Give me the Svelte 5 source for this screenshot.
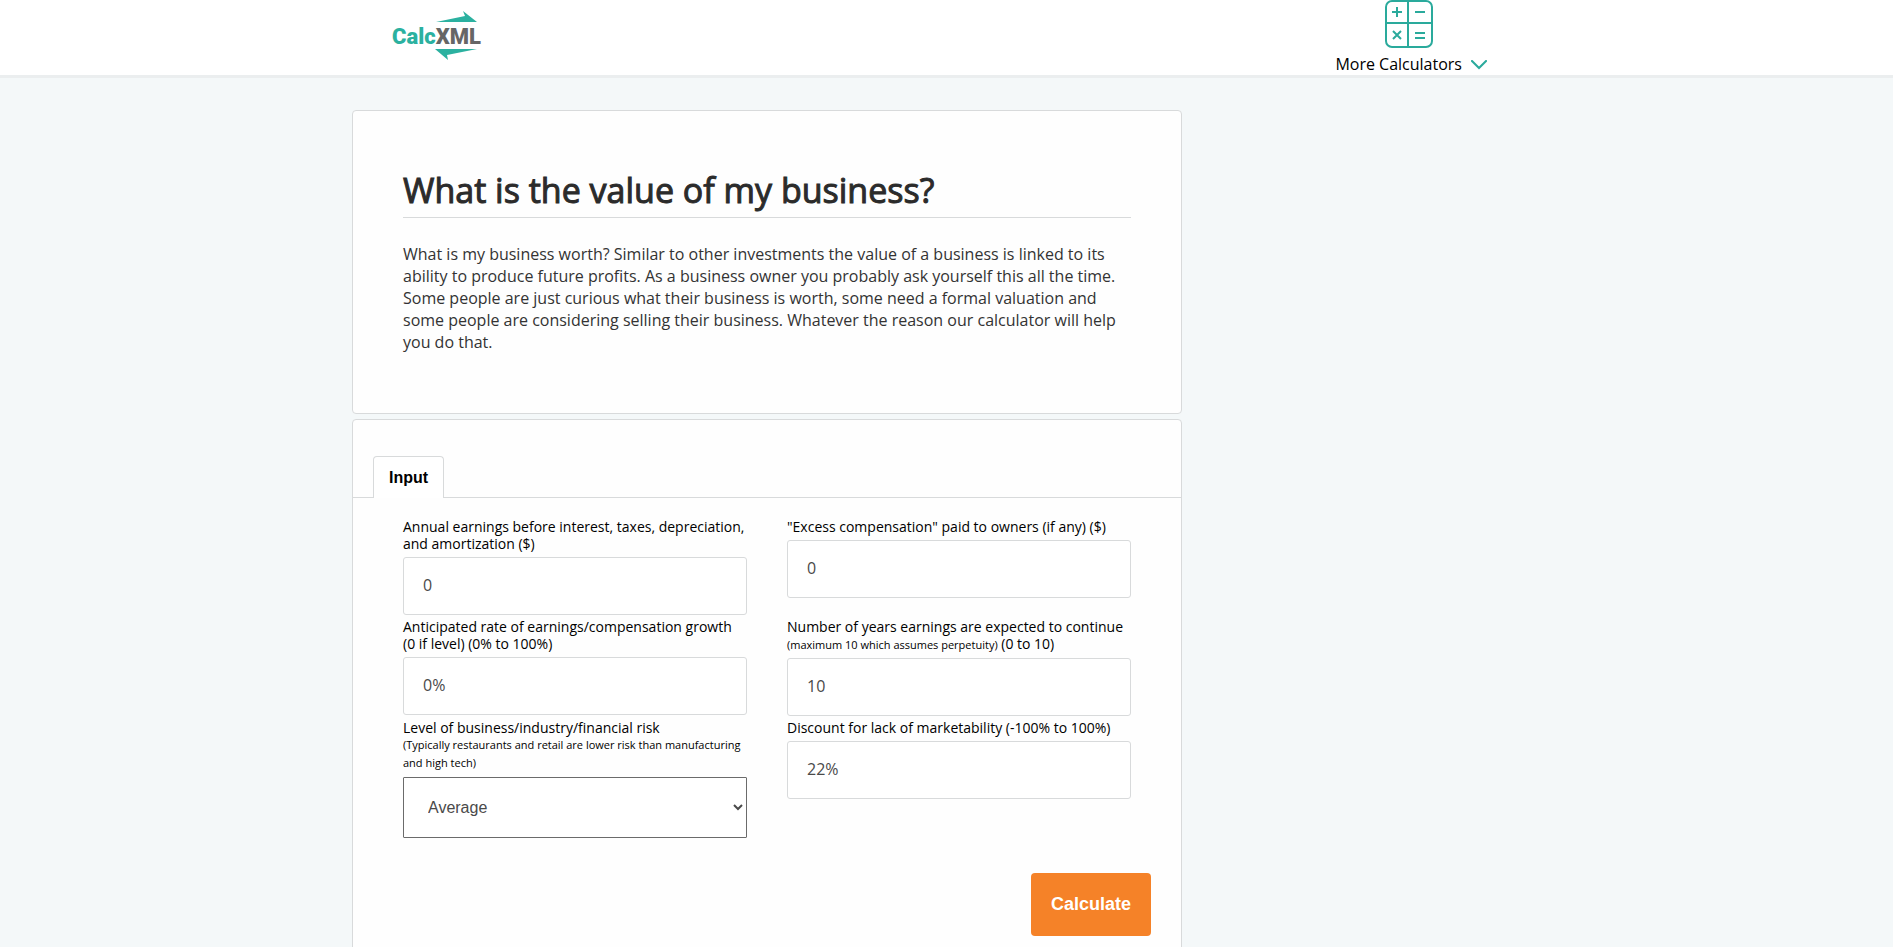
<script>
	const risks = ['Low', 'Below average', 'Average', 'Above average', 'High'];
	let earnings = '0';
	let excess = '0';
	let growth = '0%';
	let years = '10';
	let risk = 'Average';
	let discount = '22%';
</script>

<div class="page">
	<header>
		<div class="container bar">
			<a class="logo" href="/" aria-label="CalcXML">
				<svg viewBox="0 0 92 52" width="92" height="52">
					<path d="M44 12L73 6L71 1L85 12Z" fill="#2bb1a0" />
					<text x="0" y="34" fill="#2bb1a0">Calc<tspan fill="#666">XML</tspan></text>
					<path d="M43 39H85L55 45L56 50Z" fill="#2bb1a0" />
				</svg>
			</a>
			<button class="more" type="button">
				<svg
					class="grid-icon"
					viewBox="0 0 48 48"
					width="48"
					height="48"
					fill="none"
					stroke="#2aaa9c"
					stroke-width="2"
				>
					<rect x="1" y="1" width="46" height="46" rx="6" />
					<path d="M23 1V47M1 23H47M7 12H17M12 7V17M30 12H40M8 31L16 39M16 31L8 39M30 33H40M30 38H40" />
				</svg>
				<span class="more-label">
					More Calculators
					<svg viewBox="0 0 16 10" width="16" height="10" fill="none" stroke="#2aaa9c" stroke-width="2">
						<path d="M1 1L8 8L15 1" stroke-linecap="square" />
					</svg>
				</span>
			</button>
		</div>
	</header>

	<main class="container">
		<section class="card intro">
			<h1>What is the value of my business?</h1>
			<p>
				What is my business worth? Similar to other investments the value of a business is linked to its
				ability to produce future profits. As a business owner you probably ask yourself this all the
				time. Some people are just curious what their business is worth, some need a formal valuation and
				some people are considering selling their business. Whatever the reason our calculator will help
				you do that.
			</p>
		</section>

		<section class="card calc">
			<div class="tabs" role="tablist">
				<button class="tab" type="button" role="tab" aria-selected="true">Input</button>
			</div>
			<form on:submit|preventDefault>
				<div class="fields">
					<div class="field">
						<label for="earnings">
							Annual earnings before interest, taxes, depreciation, and amortization ($)
						</label>
						<input id="earnings" type="text" bind:value={earnings} />
					</div>
					<div class="field">
						<label for="excess">"Excess compensation" paid to owners (if any) ($)</label>
						<input id="excess" type="text" bind:value={excess} />
					</div>
					<div class="field">
						<label for="growth">
							Anticipated rate of earnings/compensation growth (0 if level) (0% to 100%)
						</label>
						<input id="growth" type="text" bind:value={growth} />
					</div>
					<div class="field">
						<label for="years">
							Number of years earnings are expected to continue
							<small>(maximum 10 which assumes perpetuity)</small> (0 to 10)
						</label>
						<input id="years" type="text" bind:value={years} />
					</div>
					<div class="field">
						<label for="risk">
							Level of business/industry/financial risk
							<small class="note">
								(Typically restaurants and retail are lower risk than manufacturing and high tech)
							</small>
						</label>
						<select id="risk" bind:value={risk}>
							{#each risks as r}
								<option>{r}</option>
							{/each}
						</select>
					</div>
					<div class="field">
						<label for="discount">Discount for lack of marketability (-100% to 100%)</label>
						<input id="discount" type="text" bind:value={discount} />
					</div>
				</div>
				<div class="actions">
					<button class="calculate" type="submit">Calculate</button>
				</div>
			</form>
		</section>
	</main>
</div>

<style>
	:global(body) {
		background: #f4f8f9;
	}
	.page {
		font-family: 'Open Sans', sans-serif;
		color: #000;
	}
	.page * {
		box-sizing: border-box;
	}
	.container {
		max-width: 1189px;
		margin: 0 auto;
	}
	header {
		background: #fff;
		border-bottom: 3px solid #ebeeef;
	}
	.bar {
		display: flex;
		justify-content: space-between;
		padding: 0 54px 0 40px;
	}
	.logo {
		padding-top: 10px;
	}
	.logo svg {
		display: block;
	}
	.logo text {
		font: 900 22px Roboto, sans-serif;
	}
	.more {
		display: flex;
		flex-direction: column;
		align-items: center;
		padding: 0;
		border: 0;
		background: none;
		font: 16px/22px 'Open Sans', sans-serif;
		color: #000;
		cursor: pointer;
	}
	.grid-icon {
		margin-right: 4px;
	}
	.more-label {
		display: flex;
		align-items: center;
		gap: 9px;
		padding-top: 5px;
	}
	.more-label svg {
		margin-top: 2px;
	}
	main {
		padding-top: 32px;
	}
	.card {
		max-width: 830px;
		background: #fefefe;
		border: 1px solid #d8dadb;
		border-radius: 4px;
	}
	.intro {
		padding: 55px 50px 60px;
		margin-bottom: 5px;
	}
	h1 {
		margin: 0 0 25px;
		padding-bottom: 3px;
		border-bottom: 1px solid #d8dadb;
		font-size: 34px;
		line-height: 48px;
		font-weight: 400;
		color: #2b2b2b;
		-webkit-text-stroke: 1px #2b2b2b;
	}
	.intro p {
		margin: 0;
		font-size: 16px;
		line-height: 22px;
		color: #333;
	}
	.tabs {
		display: flex;
		padding: 36px 20px 0;
		border-bottom: 1px solid #d8dadb;
	}
	.tab {
		margin-bottom: -1px;
		height: 42px;
		padding: 0 15px;
		border: 1px solid #d8dadb;
		border-bottom: 0;
		border-radius: 4px 4px 0 0;
		background: #fff;
		font: bold 16px 'Liberation Sans', Arial, sans-serif;
		color: #000;
	}
	form {
		padding: 20px 50px 0;
	}
	.fields {
		display: grid;
		grid-template-columns: 1fr 1fr;
		gap: 3px 40px;
	}
	label {
		display: block;
		margin-bottom: 5px;
		font-size: 14px;
		line-height: 17px;
	}
	small {
		font-size: 11px;
	}
	.note {
		display: block;
		line-height: 18px;
	}
	input,
	select {
		display: block;
		width: 100%;
		height: 58px;
		padding: 0 19px 2px;
		border: 1px solid #d8dadb;
		border-radius: 3px;
		background: #fff;
		font: 16px 'Open Sans', sans-serif;
		color: #4a4a4a;
	}
	select {
		height: 61px;
		padding: 0 0 0 20px;
		border-color: #6b6b6b;
		border-radius: 1px;
		font-family: 'Liberation Sans', Arial, sans-serif;
	}
	.actions {
		display: flex;
		justify-content: flex-end;
		margin-right: -20px;
		padding: 35px 0 30px;
	}
	.calculate {
		height: 63px;
		padding: 0 20px;
		border: 0;
		border-radius: 4px;
		background: #f58228;
		font: bold 18px 'Liberation Sans', Arial, sans-serif;
		color: #fff;
		cursor: pointer;
	}
</style>
